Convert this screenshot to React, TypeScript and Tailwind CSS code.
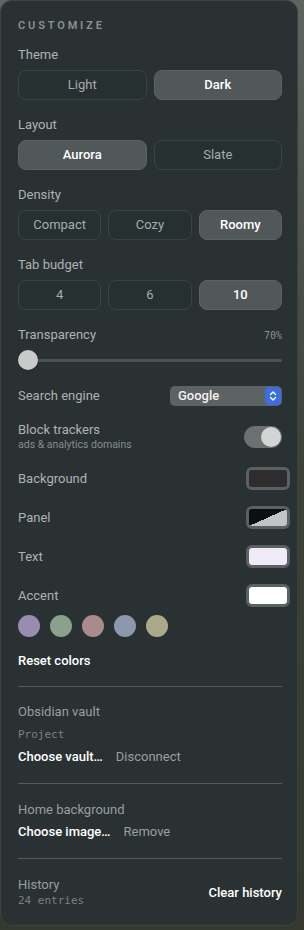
import React from 'react';

const mono = { fontFamily: '"DejaVu Sans Mono", "Liberation Mono", monospace' };

const Segmented = ({ options, active, cols }: { options: string[]; active: string; cols: 2 | 3 }) => (
  <div className={`grid ${cols === 2 ? 'grid-cols-2' : 'grid-cols-3'} gap-[7px] mt-[7px]`}>
    {options.map((o) => (
      <button
        key={o}
        className={
          o === active
            ? 'h-[30px] rounded-[8px] bg-[#515859] border border-[#5c6364] text-white font-medium text-[13px]'
            : 'h-[30px] rounded-[8px] bg-[#263031] border border-[#3a4445] text-[#a6abac] text-[13px]'
        }
      >
        {o}
      </button>
    ))}
  </div>
);

const Label = ({ children }: { children: React.ReactNode }) => (
  <div className="text-[13px] leading-4 text-[#aeb2b3]">{children}</div>
);

const Swatch = ({ children }: { children: React.ReactNode }) => (
  <div className="w-[44px] h-[23px] rounded-[6px] border-[3px] border-[#5b6162] overflow-hidden mr-[-8px]">
    {children}
  </div>
);

const ColorRow = ({ label, children }: { label: string; children: React.ReactNode }) => (
  <div className="flex items-center justify-between h-[23px]">
    <Label>{label}</Label>
    <Swatch>{children}</Swatch>
  </div>
);

const accents = ['#9a8bb1', '#8ba18c', '#a98b8c', '#8c98ab', '#aca98b'];

export default function App() {
  return (
    <div className="w-[304px] h-[930px] bg-gradient-to-b from-[#5f6461] via-[#3d4136] to-[#35382d] overflow-hidden">
      <div
        className="w-[298px] h-[926px] rounded-[12px] bg-[#293133] border border-[#3a4244] pl-[17px] pr-[15px] pt-[17px] flex flex-col"
        style={{ fontFamily: 'Roboto, "Noto Sans", sans-serif' }}
      >
        <div className="text-[11px] leading-4 font-semibold tracking-[0.26em] text-[#8c9192]">CUSTOMIZE</div>

        <div className="mt-[13px]">
          <Label>Theme</Label>
          <Segmented options={['Light', 'Dark']} active="Dark" cols={2} />
        </div>
        <div className="mt-[17px]">
          <Label>Layout</Label>
          <Segmented options={['Aurora', 'Slate']} active="Aurora" cols={2} />
        </div>
        <div className="mt-[17px]">
          <Label>Density</Label>
          <Segmented options={['Compact', 'Cozy', 'Roomy']} active="Roomy" cols={3} />
        </div>
        <div className="mt-[17px]">
          <Label>Tab budget</Label>
          <Segmented options={['4', '6', '10']} active="10" cols={3} />
        </div>

        <div className="mt-[17px]">
          <div className="flex items-center justify-between">
            <Label>Transparency</Label>
            <span className="text-[10px] text-[#8c9192]" style={mono}>70%</span>
          </div>
          <div className="relative h-[20px] mt-[7px] flex items-center">
            <div className="w-full h-[3px] rounded-full bg-[#4a5254]" />
            <div className="absolute left-0 top-0 w-[20px] h-[20px] rounded-full bg-[#c9cbcb] shadow" />
          </div>
        </div>

        <div className="mt-[16px] flex items-center justify-between h-[20px]">
          <Label>Search engine</Label>
          <div className="w-[112px] h-[20px] rounded-[5px] bg-[#5d6263] flex items-center justify-between pl-[8px] pr-[1px]">
            <span className="text-[13px] font-medium text-[#f2f2f2]">Google</span>
            <span className="w-[16px] h-[18px] rounded-[4px] bg-[#3c6ee2] flex items-center justify-center">
              <svg width="8" height="12" viewBox="0 0 8 12" fill="none" stroke="white" strokeWidth="1.4" strokeLinecap="round" strokeLinejoin="round">
                <path d="M1.5 4.5 L4 2 L6.5 4.5" />
                <path d="M1.5 7.5 L4 10 L6.5 7.5" />
              </svg>
            </span>
          </div>
        </div>

        <div className="mt-[16px] flex items-center justify-between">
          <div>
            <Label>Block trackers</Label>
            <div className="text-[10.5px] leading-[13px] text-[#878c8d]">ads &amp; analytics domains</div>
          </div>
          <div className="w-[38px] h-[22px] rounded-full bg-[#6c7071] flex items-center justify-end pr-[1px]">
            <div className="w-[20px] h-[20px] rounded-full bg-[#d3d4d4]" />
          </div>
        </div>

        <div className="mt-[16px] flex flex-col gap-[16px]">
          <ColorRow label="Background">
            <div className="w-full h-full bg-[#2e2c2c]" />
          </ColorRow>
          <ColorRow label="Panel">
            <div className="w-full h-full bg-[#c1c5c5]" style={{ background: 'linear-gradient(to bottom right, #0b0f0f 50%, #c1c5c5 50%)' }} />
          </ColorRow>
          <ColorRow label="Text">
            <div className="w-full h-full bg-[#efeaf6]" />
          </ColorRow>
          <ColorRow label="Accent">
            <div className="w-full h-full bg-white" />
          </ColorRow>
        </div>

        <div className="mt-[8px] flex gap-[10px]">
          {accents.map((c) => (
            <div key={c} className="w-[22px] h-[22px] rounded-full" style={{ backgroundColor: c }} />
          ))}
        </div>

        <div className="mt-[16px] text-[13px] leading-4 font-medium text-white">Reset colors</div>

        <div className="mt-[17px] h-px bg-[#545b5d]" />

        <div className="mt-[17px]">
          <div className="text-[13px] leading-4 text-[#999ea0]">Obsidian vault</div>
          <div className="mt-[8px] text-[11px] leading-[14px] text-[#7b8082]" style={mono}>Project</div>
          <div className="mt-[7px] flex items-center gap-[13px] text-[13px] leading-4">
            <span className="font-medium text-white">Choose vault…</span>
            <span className="text-[#9a9fa1]">Disconnect</span>
          </div>
        </div>

        <div className="mt-[18px] h-px bg-[#545b5d]" />

        <div className="mt-[18px]">
          <div className="text-[13px] leading-4 text-[#999ea0]">Home background</div>
          <div className="mt-[6px] flex items-center gap-[13px] text-[13px] leading-4">
            <span className="font-medium text-white">Choose image…</span>
            <span className="text-[#9a9fa1]">Remove</span>
          </div>
        </div>

        <div className="mt-[18px] h-px bg-[#545b5d]" />

        <div className="mt-[18px] flex items-center justify-between">
          <div>
            <div className="text-[13px] leading-4 text-[#999ea0]">History</div>
            <div className="mt-px text-[11px] leading-[14px] text-[#7b8082]" style={mono}>24 entries</div>
          </div>
          <span className="text-[13px] font-medium text-white">Clear history</span>
        </div>
      </div>
    </div>
  );
}
